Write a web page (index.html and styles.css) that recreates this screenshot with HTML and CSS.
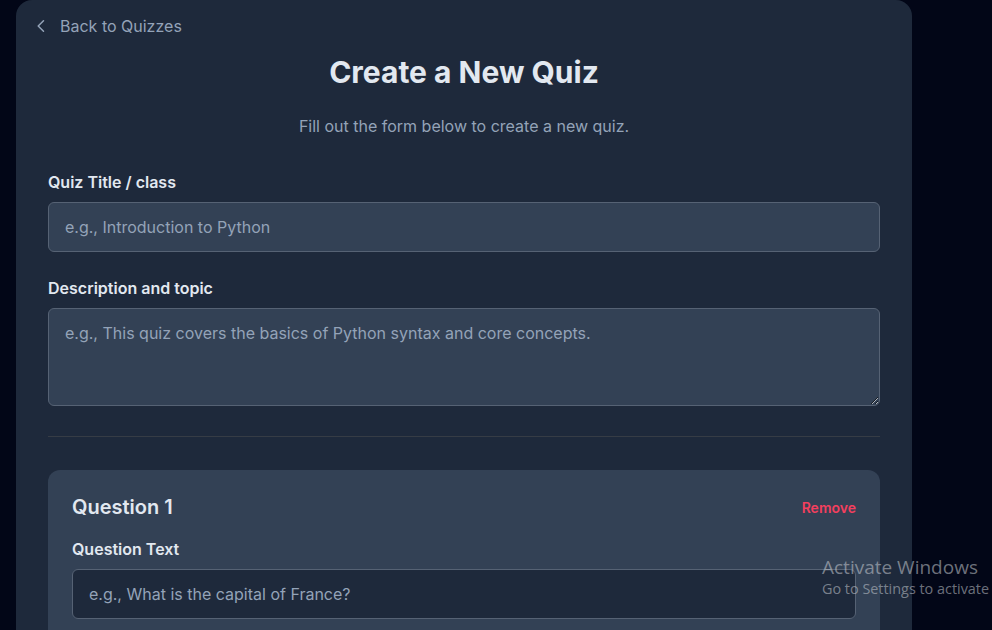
FILE: index.html
```html
<!DOCTYPE html>
<html lang="en">
<head>
<meta charset="utf-8">
<title>Create a New Quiz</title>
<link rel="stylesheet" href="styles.css">
</head>
<body>
<main class="panel">
  <a class="back" href="#">
    <svg class="chev" width="16" height="16" viewBox="0 0 16 16" fill="none" stroke="currentColor" stroke-width="1.5" stroke-linecap="round" stroke-linejoin="round"><path d="M10.5 2.8 5.2 8 10.5 13.2"/></svg>
    <span>Back to Quizzes</span>
  </a>
  <h1 class="title">Create a New Quiz</h1>
  <p class="subtitle">Fill out the form below to create a new quiz.</p>

  <div class="field">
    <label class="label">Quiz Title / class</label>
    <input class="input" type="text" placeholder="e.g., Introduction to Python">
  </div>
  <div class="field">
    <label class="label">Description and topic</label>
    <textarea class="input textarea" placeholder="e.g., This quiz covers the basics of Python syntax and core concepts."></textarea>
  </div>

  <hr class="divider">

  <section class="qcard">
    <div class="qhead">
      <h2 class="qtitle">Question 1</h2>
      <button class="remove">Remove</button>
    </div>
    <label class="label">Question Text</label>
    <input class="input dark" type="text" placeholder="e.g., What is the capital of France?">
  </section>
</main>
<div class="watermark">
  <div class="wm1">Activate Windows</div>
  <div class="wm2">Go to Settings to activate</div>
</div>
</body>
</html>
```
FILE: styles.css
```css
* { box-sizing: border-box; }
html, body { margin: 0; height: 100%; overflow: hidden; }
body {
  background: #020617;
  font-family: Inter, "Noto Sans", sans-serif;
  color: #e2e8f0;
}
.panel {
  margin-left: 16px;
  width: 896px;
  min-height: 700px;
  background: #1e293b;
  border-radius: 16px;
  padding: 14px 32px 0;
}
.back {
  display: inline-flex;
  align-items: center;
  gap: 11px;
  color: #94a3b8;
  text-decoration: none;
  font-size: 16px;
  line-height: 24px;
  margin-left: -15px;
}
.chev { display: block; }
.title {
  margin: 16px 0 0;
  text-align: center;
  font-size: 30px;
  line-height: 36px;
  font-weight: 700;
  color: #e2e8f0;
}
.subtitle {
  margin: 24px 0 0;
  text-align: center;
  font-size: 16px;
  line-height: 24px;
  color: #94a3b8;
}
.field { display: flex; flex-direction: column; gap: 8px; margin-top: 32px; }
.field + .field { margin-top: 24px; }
.label {
  display: block;
  font-size: 16px;
  line-height: 24px;
  font-weight: 600;
  color: #e2e8f0;
}
.input {
  display: block;
  width: 100%;
  height: 50px;
  background: #334155;
  border: 1px solid #566274;
  border-radius: 6px;
  padding: 0 16px;
  font-family: inherit;
  font-size: 16px;
  color: #e2e8f0;
  outline: none;
}
.input::placeholder { color: #94a3b8; }
.textarea {
  height: 98px;
  padding: 12px 16px;
  line-height: 24px;
  resize: vertical;
}
.divider {
  border: 0;
  border-top: 1px solid #363c45;
  margin: 30px 0 33px;
}
.qcard {
  background: #334155;
  border-radius: 12px;
  padding: 23px 24px 24px;
}
.qhead {
  display: flex;
  justify-content: space-between;
  align-items: center;
  margin-bottom: 16px;
}
.qtitle {
  margin: 0;
  font-size: 20px;
  line-height: 28px;
  font-weight: 600;
  color: #e2e8f0;
}
.remove {
  background: none;
  border: 0;
  padding: 0;
  font-family: inherit;
  font-size: 14px;
  font-weight: 600;
  color: #f43f5e;
}
.qcard .label { margin-bottom: 8px; }
.input.dark { background: #1e293b; }
.watermark {
  position: absolute;
  left: 822px;
  top: 555px;
  color: rgba(200, 204, 210, 0.55);
  font-family: "Open Sans", "Noto Sans", sans-serif;
  white-space: nowrap;
  pointer-events: none;
}
.wm1 { font-size: 19px; line-height: 24px; }
.wm2 { font-size: 14.4px; line-height: 20px; }
```
